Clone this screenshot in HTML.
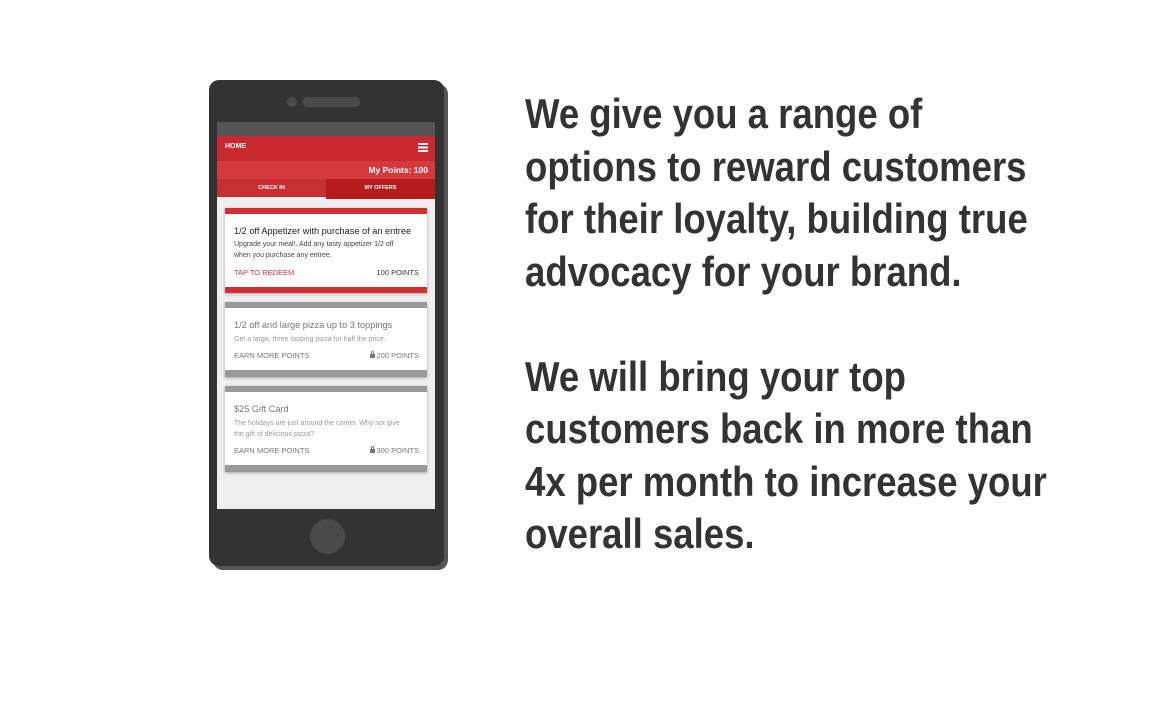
<!DOCTYPE html>
<html><head><meta charset="utf-8"><style>
*{margin:0;padding:0;box-sizing:border-box}
body{width:1170px;height:723px;background:#fff;position:relative;overflow:hidden;font-family:"Liberation Sans",sans-serif}
.a{position:absolute}
.txt{position:absolute;left:525px;top:88px;font-weight:bold;font-size:42px;line-height:52.5px;color:#333;white-space:nowrap;transform:scaleX(0.87);transform-origin:left top}
.card{position:absolute;left:225px;width:202px;background:#fff;box-shadow:0 1px 3px rgba(0,0,0,.3)}
.card .t{position:absolute;left:9px;font-size:9.2px;color:#222;white-space:nowrap}
.card .d{position:absolute;left:9px;font-size:7px;line-height:11px;color:#555;white-space:nowrap}
.card .f{position:absolute;left:9px;right:8px;font-size:7.5px;display:flex;justify-content:space-between}
.g .t{color:#777}.g .d{color:#999}.g .f{color:#777}
.lock{display:inline-block;width:5px;height:4px;background:#777;margin-right:1.5px;position:relative;vertical-align:0px}
.lock:before{content:"";position:absolute;left:0.8px;top:-3px;width:3.4px;height:3.5px;border:1px solid #777;border-bottom:none;border-radius:2px 2px 0 0;box-sizing:border-box}
</style></head><body>
<div class="a" style="left:213px;top:84px;width:235px;height:486px;background:#555;border-radius:10px"></div>
<div class="a" style="left:209px;top:80px;width:235px;height:486px;background:#333;border-radius:10px"></div>
<div class="a" style="left:287px;top:97px;width:10px;height:10px;border-radius:50%;background:#4a4a4a"></div>
<div class="a" style="left:302px;top:97px;width:58px;height:10px;border-radius:5px;background:#4a4a4a"></div>
<div class="a" style="left:310px;top:519px;width:35px;height:35px;border-radius:50%;background:#4a4a4a"></div>
<div class="a" style="left:217px;top:122px;width:218px;height:387px;background:#efefef"></div>
<div class="a" style="left:217px;top:122px;width:218px;height:14px;background:#555"></div>
<div class="a" style="left:217px;top:136px;width:218px;height:25px;background:#c8282e"></div>
<div class="a" style="left:225px;top:143px;font-size:7px;font-weight:bold;color:#fff">HOME</div>
<div class="a" style="left:418px;top:143px;width:10px;height:1.5px;background:#fff;box-shadow:0 3.5px 0 #fff,0 7px 0 #fff"></div>
<div class="a" style="left:217px;top:161px;width:218px;height:18px;background:#d43a3d"></div>
<div class="a" style="right:742px;top:165px;font-size:8.5px;font-weight:bold;color:#fff">My Points: 100</div>
<div class="a" style="left:217px;top:179px;width:109px;height:20px;background:#c63033;border-bottom:2px solid #eee"></div>
<div class="a" style="left:326px;top:179px;width:109px;height:20px;background:#b71c1c"></div>
<div class="a" style="left:217px;top:185px;width:109px;text-align:center;font-size:5.5px;font-weight:bold;color:#fff">CHECK IN</div>
<div class="a" style="left:326px;top:185px;width:109px;text-align:center;font-size:5.5px;font-weight:bold;color:#fff">MY OFFERS</div>

<div class="card" style="top:208px;height:85px;border-top:6px solid #d32f2f;border-bottom:6px solid #d32f2f">
<div class="t" style="top:12px">1/2 off Appetizer with purchase of an entree</div>
<div class="d" style="top:25px;color:#444">Upgrade your meal!. Add any tasty appetizer 1/2 off<br>when you purchase any entree.</div>
<div class="f" style="top:54px"><span style="color:#d32f2f">TAP TO REDEEM</span><span style="color:#333">100 POINTS</span></div>
</div>
<div class="card g" style="top:302px;height:75px;border-top:6px solid #999;border-bottom:7px solid #999">
<div class="t" style="top:12px">1/2 off and large pizza up to 3 toppings</div>
<div class="d" style="top:26px">Get a large, three topping pizza for half the price.</div>
<div class="f" style="top:43px"><span>EARN MORE POINTS</span><span><i class="lock"></i>200 POINTS</span></div>
</div>
<div class="card g" style="top:386px;height:86px;border-top:6px solid #999;border-bottom:7px solid #999">
<div class="t" style="top:12px">$25 Gift Card</div>
<div class="d" style="top:26px">The holidays are just around the corner. Why not give<br>the gift of delicious pizza?</div>
<div class="f" style="top:54px"><span>EARN MORE POINTS</span><span><i class="lock"></i>300 POINTS</span></div>
</div>

<div class="txt">We give you a range of<br>options to reward customers<br>for their loyalty, building true<br>advocacy for your brand.<br><br>We will bring your top<br>customers back in more than<br>4x per month to increase your<br>overall sales.</div>
</body></html>
